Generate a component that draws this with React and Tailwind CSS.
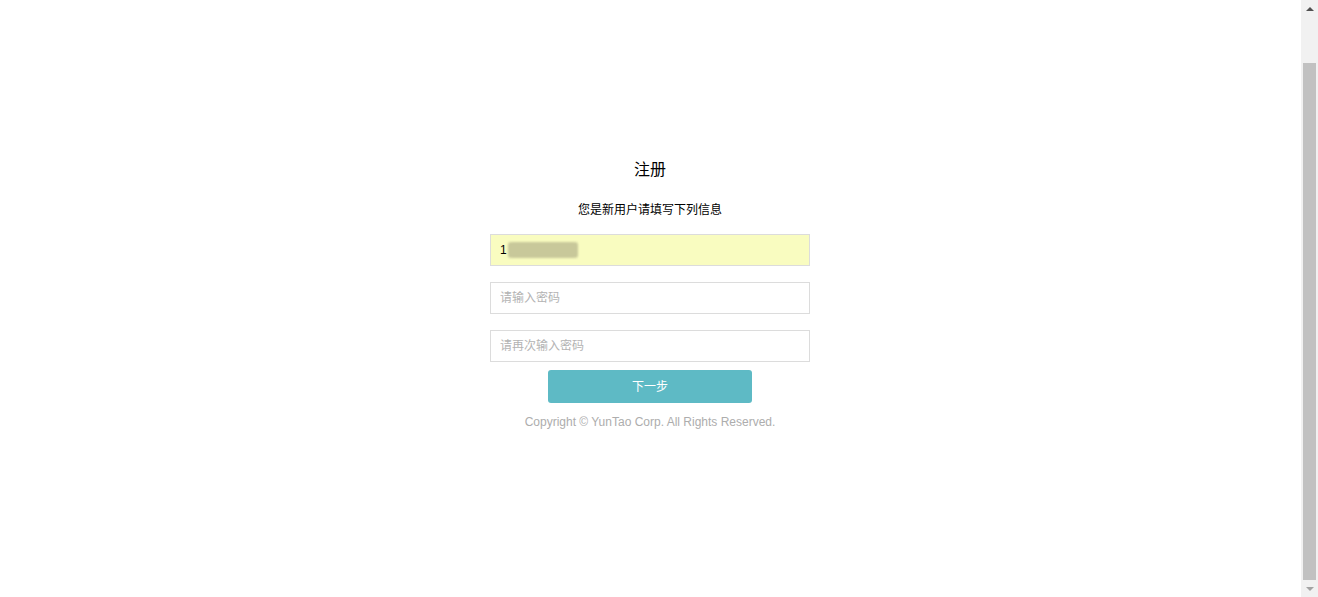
import React from "react";

export default function App() {
  return (
    <div className="flex h-[597px] w-full bg-white" style={{ fontFamily: '"Liberation Sans", Arial, "Noto Sans CJK SC", sans-serif' }}>
      {/* MAIN */}
      <div className="flex flex-1 flex-col items-center pr-[1px] pt-[160px]">
        <h1 className="text-[16px] leading-[20px] text-black">注册</h1>
        <p className="mt-[20px] text-[12px] leading-[20px] text-black">您是新用户请填写下列信息</p>

        <div className="mt-[14px] flex h-[32px] w-[320px] items-center border border-[#dcdcdc] bg-[#f9fcc0] pl-[9px] text-[12px] text-black">
          <span>1</span>
          <span className="ml-[1px] h-[16px] w-[70px] rounded-[3px] bg-[#c8c89a] blur-[1px]"></span>
        </div>

        <input
          className="mt-[16px] h-[32px] w-[320px] border border-[#dcdcdc] px-[9px] text-[12px] outline-none placeholder:text-[#b3b3b3]"
          placeholder="请输入密码"
          type="password"
        />
        <input
          className="mt-[16px] h-[32px] w-[320px] border border-[#dcdcdc] px-[9px] text-[12px] outline-none placeholder:text-[#b3b3b3]"
          placeholder="请再次输入密码"
          type="password"
        />

        <button className="mt-[8px] h-[33px] w-[204px] rounded-[3px] bg-[#5ebac5] text-[12px] text-white">下一步</button>

        <p className="mt-[11px] text-[12px] leading-[16px] text-[#adadad]">Copyright © YunTao Corp. All Rights Reserved.</p>
      </div>

      {/* SCROLLBAR */}
      <div className="flex w-[17px] flex-col bg-[#f1f1f1]">
        <div className="flex h-[17px] items-center justify-center">
          <span className="h-0 w-0 border-x-[4px] border-b-[4px] border-x-transparent border-b-[#505050]"></span>
        </div>
        <div className="mx-[2px] mt-[46px] flex-1 bg-[#c1c1c1]"></div>
        <div className="flex h-[17px] items-center justify-center">
          <span className="h-0 w-0 border-x-[4px] border-t-[4px] border-x-transparent border-t-[#a3a3a3]"></span>
        </div>
      </div>
    </div>
  );
}
